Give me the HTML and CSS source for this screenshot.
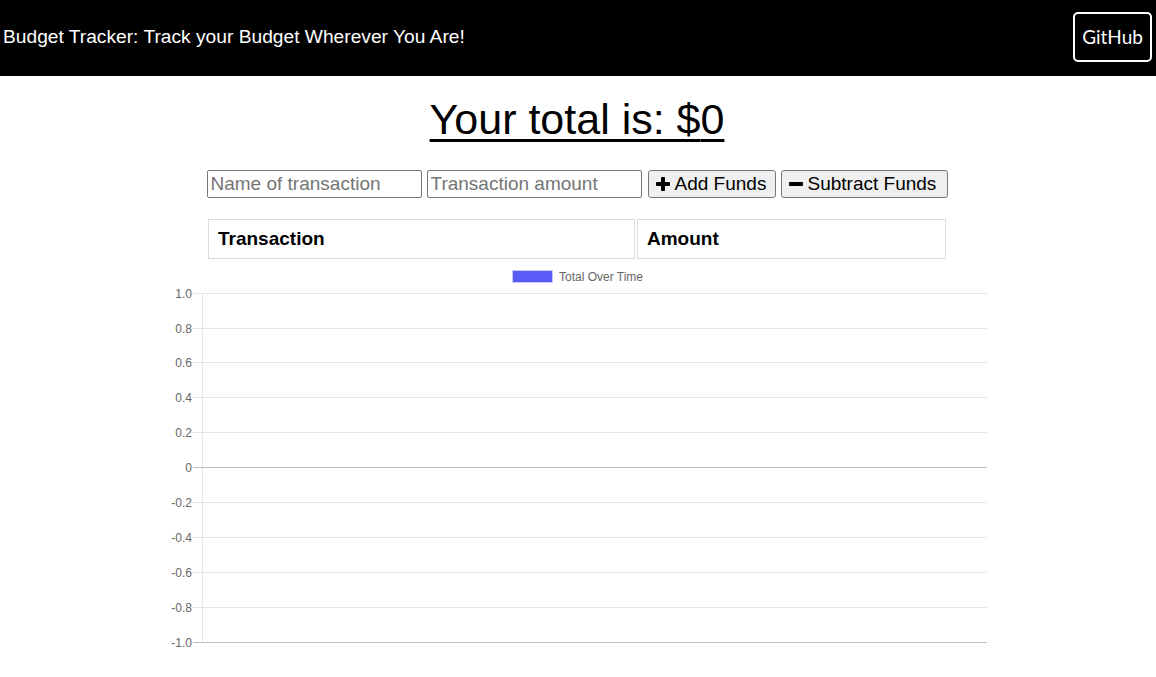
FILE: index.html
```html
<!DOCTYPE html>
<html lang="en">
<head>
<meta charset="utf-8">
<title>Budget Tracker</title>
<link rel="stylesheet" href="styles.css">
</head>
<body>
<header class="topbar">
  <div class="brand">Budget Tracker: Track your Budget Wherever You Are!</div>
  <a class="gh-btn" href="#">GitHub</a>
</header>
<main class="wrap">
  <h1 class="total">Your total is: $<span>0</span></h1>
  <form class="form-row" onsubmit="return false">
    <input class="field" type="text" placeholder="Name of transaction">
    <input class="field" type="number" placeholder="Transaction amount">
    <button class="btn btn-add" type="button"><svg class="ico" viewBox="0 0 14 14" width="14" height="14"><rect x="5" y="0" width="4" height="14" rx="1"/><rect x="0" y="5" width="14" height="4" rx="1"/></svg> Add Funds</button>
    <button class="btn btn-sub" type="button"><svg class="ico" viewBox="0 0 14 14" width="14" height="14"><rect x="0" y="5" width="14" height="4" rx="1"/></svg> Subtract Funds</button>
  </form>
  <table class="tx-table">
    <thead>
      <tr><th class="c1">Transaction</th><th class="c2">Amount</th></tr>
    </thead>
    <tbody></tbody>
  </table>
  <div class="chart-wrap">
    <svg class="chart" width="840" height="390" viewBox="0 0 840 390">
      <rect x="355.5" y="8.5" width="40" height="12" fill="#5a5af6" stroke="#c8c8ff" stroke-width="1"/>
      <text x="402" y="19" class="legend">Total Over Time</text>
      <g class="grid">
        <line x1="36" y1="31.5" x2="830" y2="31.5"/>
        <line x1="36" y1="66.5" x2="830" y2="66.5"/>
        <line x1="36" y1="100.5" x2="830" y2="100.5"/>
        <line x1="36" y1="135.5" x2="830" y2="135.5"/>
        <line x1="36" y1="170.5" x2="830" y2="170.5"/>
        <line x1="36" y1="240.5" x2="830" y2="240.5"/>
        <line x1="36" y1="275.5" x2="830" y2="275.5"/>
        <line x1="36" y1="310.5" x2="830" y2="310.5"/>
        <line x1="36" y1="345.5" x2="830" y2="345.5"/>
        <line x1="45.5" y1="31" x2="45.5" y2="381"/>
      </g>
      <line class="zero" x1="36" y1="205.5" x2="830" y2="205.5"/>
      <line class="bottom" x1="36" y1="380.5" x2="830" y2="380.5"/>
      <g class="labels">
        <text x="35" y="31.5">1.0</text>
        <text x="35" y="66.5">0.8</text>
        <text x="35" y="100.5">0.6</text>
        <text x="35" y="135.5">0.4</text>
        <text x="35" y="170.5">0.2</text>
        <text x="35" y="205.5">0</text>
        <text x="35" y="240.5">-0.2</text>
        <text x="35" y="275.5">-0.4</text>
        <text x="35" y="310.5">-0.6</text>
        <text x="35" y="345.5">-0.8</text>
        <text x="35" y="380.5">-1.0</text>
      </g>
    </svg>
  </div>
</main>
</body>
</html>
```

FILE: styles.css
```css
* { box-sizing: border-box; }

html, body {
  margin: 0;
  padding: 0;
  background: #fff;
  font-family: "Liberation Sans", Arial, Helvetica, sans-serif;
  color: #000;
}

.topbar {
  height: 76px;
  background: #000;
  color: #fff;
  display: flex;
  align-items: center;
  justify-content: space-between;
  padding: 0 4px 0 3px;
}

.brand {
  font-size: 19.2px;
  padding-bottom: 3px;
}

.gh-btn {
  display: flex;
  align-items: center;
  justify-content: center;
  width: 79px;
  height: 50px;
  border: 2px solid #fff;
  border-radius: 5px;
  color: #fff;
  text-decoration: none;
  font-family: Lato, "Open Sans", sans-serif;
  font-size: 19px;
  margin-bottom: 3px;
}

.wrap {
  display: flex;
  flex-direction: column;
  align-items: center;
  padding-right: 2px;
}

.total {
  margin: 19px 0 0;
  font-size: 43px;
  font-weight: normal;
  text-decoration: underline;
  text-decoration-thickness: 3px;
  text-underline-offset: 5px;
  line-height: normal;
}

.form-row {
  margin: 26px 0 0;
  display: flex;
  align-items: center;
  gap: 5px;
  height: 28px;
}

.field {
  width: 215px;
  height: 28px;
  border: 1px solid #767676;
  border-radius: 2px;
  padding: 0 3px;
  font-family: "Liberation Sans", Arial, sans-serif;
  font-size: 19px;
  color: #000;
  background: #fff;
}

.field::placeholder { color: #757575; }

.field::-webkit-outer-spin-button,
.field::-webkit-inner-spin-button { -webkit-appearance: none; margin: 0; }

.btn {
  height: 28px;
  border: 1px solid #767676;
  border-radius: 3px;
  background: #efefef;
  font-family: "Liberation Sans", Arial, sans-serif;
  font-size: 19px;
  color: #000;
  display: flex;
  align-items: center;
  gap: 5px;
  padding: 0 7px;
}

.btn-add { width: 128px; margin-left: 1px; }
.btn-sub { width: 167px; }

.ico { fill: #000; flex: none; }

.tx-table {
  margin-top: 19px;
  width: 742px;
  border-spacing: 2px;
  border-collapse: separate;
}

.tx-table th {
  height: 40px;
  border: 1px solid #ddd;
  text-align: left;
  font-size: 19px;
  font-weight: bold;
  padding: 0 9px;
}

.tx-table .c1 { width: 427px; }
.tx-table .c2 { width: 309px; }

.chart-wrap {
  margin-top: 1px;
  display: flex;
  justify-content: center;
  width: 100%;
}

.chart { display: block; }

.chart .legend {
  font-family: "Liberation Sans", Arial, sans-serif;
  font-size: 12px;
  fill: #666;
}

.chart .grid line {
  stroke: #e5e5e5;
  stroke-width: 1;
}

.chart .zero,
.chart .bottom {
  stroke: #c0c0c0;
  stroke-width: 1;
}

.chart .labels text {
  font-family: "Liberation Sans", Arial, sans-serif;
  font-size: 12px;
  fill: #666;
  text-anchor: end;
  dominant-baseline: central;
}
```
